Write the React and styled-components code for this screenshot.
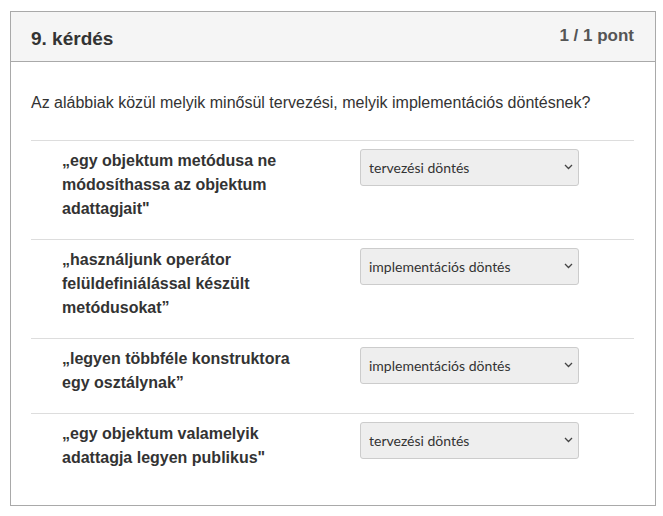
import React from "react";
import styled, { createGlobalStyle } from "styled-components";

const Global = createGlobalStyle`
  body {
    margin: 0;
    background: #fff;
    font-family: "Liberation Sans", Arial, sans-serif;
    color: #333;
  }
`;

const Page = styled.div`
  padding: 11px 7px 8px 10px;
`;

const Card = styled.section`
  border: 1px solid #a9a9a9;
  background: #fff;
  height: 495px;
  box-sizing: border-box;
`;

const Header = styled.header`
  display: flex;
  justify-content: space-between;
  align-items: flex-start;
  background: #f5f5f5;
  border-bottom: 1px solid #a9a9a9;
  height: 50px;
  box-sizing: border-box;
  padding: 0 21px 0 20px;
`;

const Title = styled.h2`
  margin: 16px 0 0;
  font-size: 19px;
  font-weight: bold;
  color: #333;
`;

const Score = styled.span`
  margin-top: 14px;
  font-size: 17px;
  font-weight: bold;
  color: #555;
`;

const Body = styled.div`
  padding: 30px 21px 0 20px;
`;

const Question = styled.p`
  margin: 0 0 27px;
  font-size: 16px;
  line-height: 21px;
`;

const Row = styled.div`
  display: grid;
  grid-template-columns: 329px 1fr;
  border-top: 1px solid #ddd;
  padding: 8px 0 18px;
`;

const Label = styled.div`
  padding-left: 31px;
  width: 240px;
  font-size: 16px;
  font-weight: bold;
  line-height: 24px;
  color: #333;
`;

const SelectWrap = styled.div`
  position: relative;
  width: 219px;
  height: 37px;
`;

const Select = styled.select`
  appearance: none;
  width: 100%;
  height: 100%;
  box-sizing: border-box;
  background: #eeeeee;
  border: 1px solid #cccccc;
  border-radius: 3px;
  padding: 0 24px 0 8px;
  font-family: Lato, "Liberation Sans", sans-serif;
  font-size: 14px;
  color: #333;
`;

const Chevron = styled.svg`
  position: absolute;
  right: 6px;
  top: 15px;
  pointer-events: none;
`;

const options = ["tervezési döntés", "implementációs döntés"];

const items = [
  { text: "„egy objektum metódusa ne módosíthassa az objektum adattagjait\"", value: options[0] },
  { text: "„használjunk operátor felüldefiniálással készült metódusokat”", value: options[1] },
  { text: "„legyen többféle konstruktora egy osztálynak”", value: options[1] },
  { text: "„egy objektum valamelyik adattagja legyen publikus\"", value: options[0] },
];

export default function App() {
  return (
    <>
      <Global />
      <Page>
        <Card>
          <Header>
            <Title>9. kérdés</Title>
            <Score>1 / 1 pont</Score>
          </Header>
          <Body>
            <Question>
              Az alábbiak közül melyik minősül tervezési, melyik implementációs döntésnek?
            </Question>
            {items.map((it, i) => (
              <Row key={i}>
                <Label>{it.text}</Label>
                <SelectWrap>
                  <Select defaultValue={it.value}>
                    {options.map((o) => (
                      <option key={o}>{o}</option>
                    ))}
                  </Select>
                  <Chevron width="9" height="6" viewBox="0 0 9 6">
                    <path d="M1 1l3.5 3.5L8 1" fill="none" stroke="#444" strokeWidth="1.3" />
                  </Chevron>
                </SelectWrap>
              </Row>
            ))}
          </Body>
        </Card>
      </Page>
    </>
  );
}
